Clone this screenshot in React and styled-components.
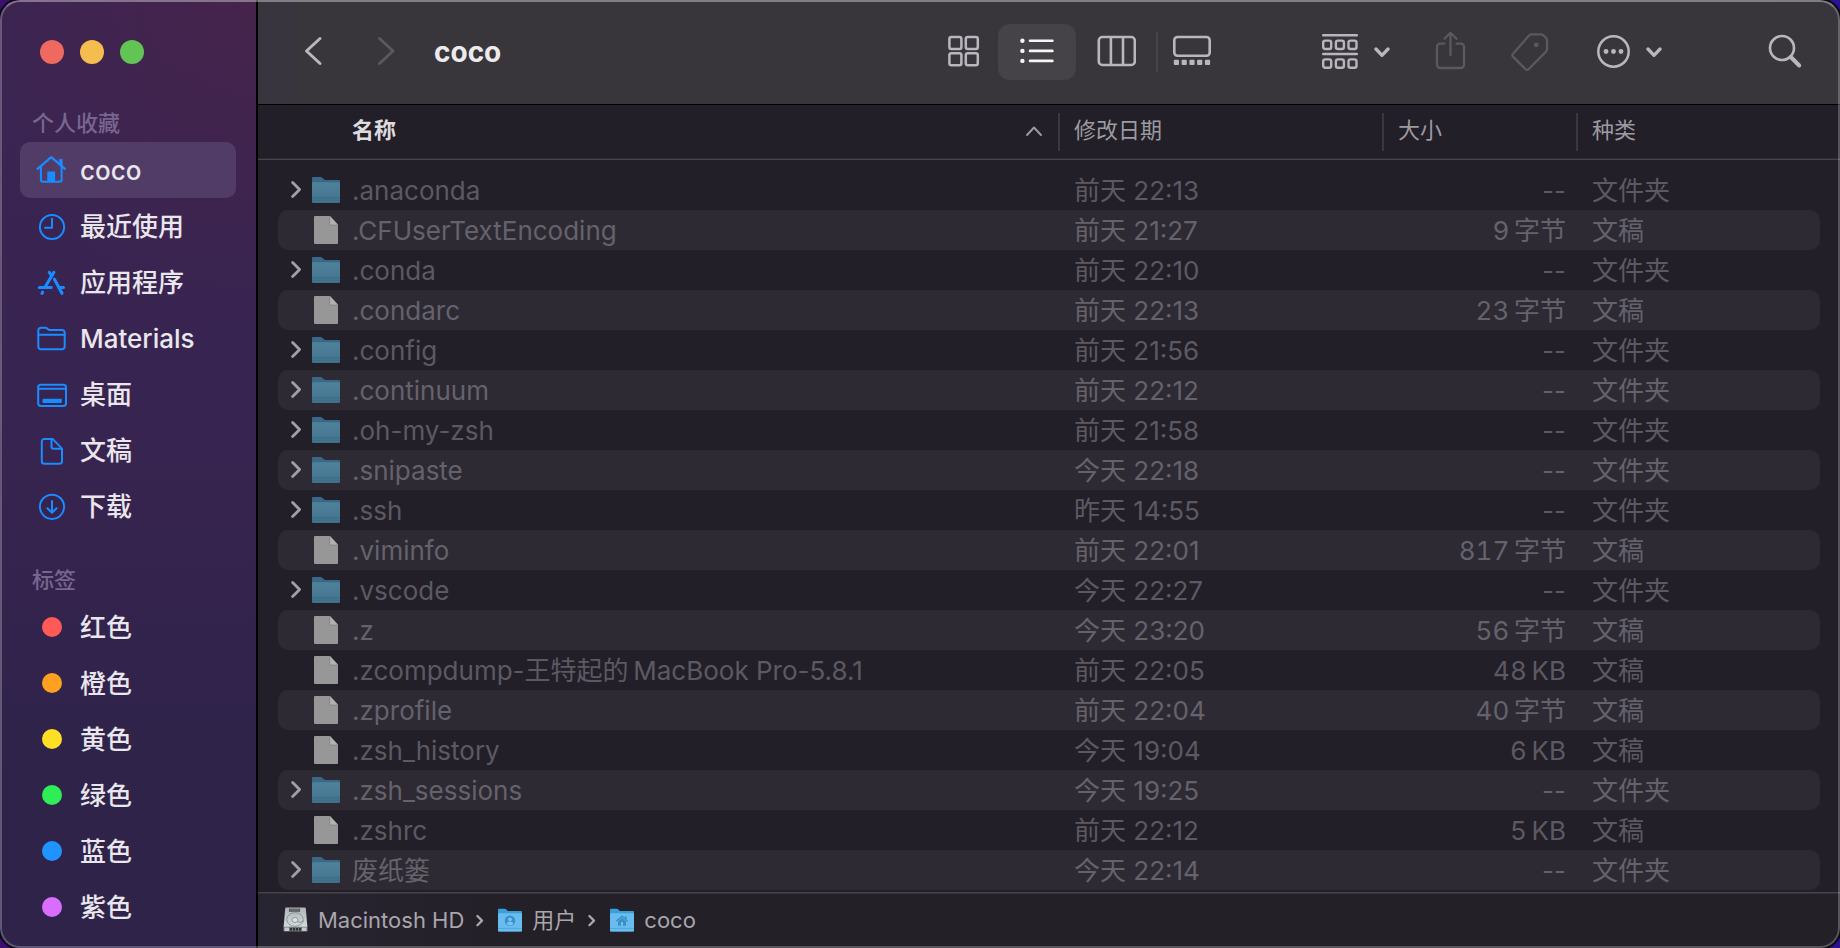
import React from "react";
import styled, { createGlobalStyle, css } from "styled-components";

const GlobalStyle = createGlobalStyle`
  *, *::before, *::after { box-sizing: border-box; }
  html, body { margin: 0; padding: 0; }
  body {
    min-height: 100vh;
    background: linear-gradient(90deg, #3c1070 0%, #33107c 50%, #2c1290 100%);
    font-family: Inter, "Noto Sans CJK SC", sans-serif;
    -webkit-font-smoothing: antialiased;
  }
  button {
    margin: 0;
    padding: 0;
    border: 0;
    background: none;
    color: inherit;
    font: inherit;
  }
  a { color: inherit; text-decoration: none; }
  svg { display: block; flex: none; }
`;

const Window = styled.div`
  position: relative;
  display: flex;
  min-height: 100vh;
  border-radius: 20px;
  overflow: hidden;
  background: #221f28;
  box-shadow: 0 0 0 2px #0c0714;

  &::after {
    content: "";
    position: absolute;
    inset: 0;
    border: 2px solid rgba(255, 255, 255, 0.24);
    border-top-color: rgba(255, 255, 255, 0.36);
    border-radius: 20px;
    pointer-events: none;
  }
`;

/* Sidebar */

const Sidebar = styled.aside`
  flex: none;
  width: 258px;
  padding: 40px 20px 12px;
  border-right: 2px solid #000;
  background:
    radial-gradient(circle at 100% 0%, rgba(80, 34, 68, 0.5), rgba(80, 34, 68, 0) 300px),
    linear-gradient(180deg, #3b2553 0%, #382450 45%, #2f234a 80%, #2f234a 100%);
`;

const TrafficLights = styled.div`
  display: flex;
  gap: 16px;
  padding-left: 20px;
  margin-bottom: 43px;
`;

const Light = styled.button`
  width: 24px;
  height: 24px;
  border-radius: 50%;
  background: ${(p) => p.$color};
`;

const Group = styled.nav`
  & + & { margin-top: 30px; }
`;

const GroupTitle = styled.h2`
  margin: 0;
  padding: 0 12px;
  height: 35px;
  font-size: 22px;
  line-height: 32px;
  font-weight: 500;
  color: #786690;
`;

const SideItem = styled.a`
  display: flex;
  align-items: center;
  gap: 12px;
  height: 56px;
  padding-left: 16px;
  border-radius: 10px;
  font-size: 26px;
  line-height: 32px;
  font-weight: 500;
  color: #e9e6ec;
  ${(p) => p.$active && css`background: #513c68;`}
`;

const Label = styled.span`
  padding-top: 2px;
`;

const TagDot = styled.span`
  flex: none;
  width: 20px;
  height: 20px;
  margin: 0 6px;
  border-radius: 50%;
  background: ${(p) => p.$color};
`;

/* Toolbar */

const Main = styled.main`
  flex: 1;
  min-width: 0;
  display: flex;
  flex-direction: column;
`;

const Toolbar = styled.header`
  display: flex;
  align-items: center;
  height: 105px;
  padding: 0 36px 0 38px;
  border-bottom: 1px solid #000;
  background: linear-gradient(90deg, #38353f 0, #38353f 28px, #38353b 40px);
`;

const NavButtons = styled.div`
  display: flex;
  gap: 39px;
`;

const ToolButton = styled.button`
  display: flex;
  align-items: center;
  justify-content: flex-start;
  gap: 16px;
  color: ${(p) => (p.$dim ? "#5b585f" : "#bab6be")};
`;

const Title = styled.h1`
  flex: 1;
  margin: 0 0 0 31px;
  font-size: 28px;
  line-height: 36px;
  font-weight: 700;
  color: #eceaed;
`;

const ViewSwitch = styled.div`
  display: flex;
  align-items: center;
  margin-right: 96px;
`;

const ViewButton = styled.button`
  display: flex;
  align-items: center;
  justify-content: center;
  width: ${(p) => (p.$wide ? 80 : 68)}px;
  height: 56px;
  border-radius: 12px;
  color: #bab6be;
  ${(p) => p.$active && css`
    width: 78px;
    background: #454248;
    color: #f6f5f6;
  `}
`;

const ViewDivider = styled.span`
  width: 2px;
  height: 40px;
  background: #454248;
`;

const Actions = styled.div`
  display: flex;
  align-items: center;
  gap: 44px;
`;

const SearchSlot = styled.div`
  margin-left: 62px;
`;

/* File list */

const List = styled.table`
  flex: 1;
  display: block;
  padding-bottom: 2px;
`;

const columns = css`
  display: grid;
  grid-template-columns: minmax(0, 1fr) 324px 194px 244px;
`;

const Head = styled.thead`
  display: block;
`;

const HeadRow = styled.tr`
  ${columns}
  align-items: center;
  height: 55px;
  padding: 0 20px;
  border-bottom: 1px solid #46434b;
  box-shadow: inset 0 -1px 0 #2f2c35;
`;

const HeadCell = styled.th`
  display: flex;
  align-items: center;
  height: 38px;
  padding: 0 16px 4px 14px;
  border-left: 2px solid #3a3740;
  font-size: 22px;
  line-height: 32px;
  font-weight: 400;
  text-align: left;
  color: #9d9aa0;
`;

const NameHeadCell = styled(HeadCell)`
  padding-left: 74px;
  border-left: 0;
`;

const SortButton = styled.button`
  flex: 1;
  display: flex;
  align-items: center;
  justify-content: space-between;
  font-weight: 700;
  color: #dddbde;
  svg { color: #9d9aa0; }
`;

const Body = styled.tbody`
  display: block;
  padding: 10px 20px 0;
`;

const Row = styled.tr`
  ${columns}
  height: 40px;
  border-radius: 10px;
  font-size: 26px;
  line-height: 38px;
  color: #5c5963;
  &:nth-child(even) {
    background: #2d2a33;
    color: #65626c;
  }
`;

const Cell = styled.td`
  padding: 2px 0 0 16px;
  white-space: nowrap;
`;

const NameCell = styled(Cell)`
  display: flex;
  align-items: center;
  padding: 0 0 0 10px;
  overflow: hidden;
`;

const SizeCell = styled(Cell)`
  padding-right: 10px;
  text-align: right;
  font-variant-numeric: ${(p) => (p.$empty ? "normal" : "tabular-nums")};
`;

const Disclosure = styled.button`
  width: 16px;
  margin-right: 6px;
  color: #a29fa5;
`;

const FileIcon = styled.span`
  flex: none;
  width: 32px;
  margin-left: ${(p) => (p.$indent ? 22 : 0)}px;
  margin-right: 10px;
`;

/* Path bar */

const PathBar = styled.nav`
  display: flex;
  align-items: center;
  gap: 10px;
  height: 56px;
  padding: 0 24px 2px;
  border-top: 1px solid #46434b;
  box-shadow: inset 0 1px 0 #35323b;
  background: linear-gradient(90deg, #282532 0, #232028 240px);
  font-size: 22px;
  line-height: 32px;
  color: #a9a6ac;
`;

const PathItem = styled.a`
  display: flex;
  align-items: center;
  gap: 10px;
`;

/* Icons */

const stroke = {
  fill: "none",
  stroke: "currentColor",
  strokeLinecap: "round",
  strokeLinejoin: "round",
};

const SideSvg = ({ children }) => (
  <svg width="32" height="32" viewBox="0 0 32 32" {...stroke} stroke="#1a8cff" strokeWidth="2" aria-hidden="true">
    {children}
  </svg>
);

const HomeIcon = () => (
  <SideSvg>
    <path d="M1.5 14.8 15.3 3.2l13.6 11.6" strokeWidth="2.2" />
    <path d="M4.9 12.5v13.2a2 2 0 0 0 2 2h16.7a2 2 0 0 0 2-2V12.5" />
    <path d="M11.3 17.5h7.8v10h-7.8z" fill="#1a8cff" stroke="none" />
    <path d="M23.6 5.4h2.6v6.6l-2.6-2.3z" fill="#1a8cff" strokeWidth="0.8" />
  </SideSvg>
);

const ClockIcon = () => (
  <SideSvg>
    <circle cx="16" cy="17" r="12.1" />
    <path d="M16 8.8v9H9" />
  </SideSvg>
);

const AppsIcon = () => (
  <SideSvg>
    <g strokeWidth="3.1">
      <path d="M17.9 6.3 9.3 20.8" />
      <path d="M13.3 6.3l2 3.2" />
      <path d="M18.4 13.2 26 27.3" />
      <path d="M3.4 21.5h11.8M22.9 21.5h4.6" />
      <path d="M6.6 26.2l-.6 1.2" />
    </g>
  </SideSvg>
);

const FolderIcon = () => (
  <SideSvg>
    <path d="M2.3 24.6V8.4a2.6 2.6 0 0 1 2.6-2.6h4.4c.9 0 1.5.3 2.1.9l.6.6c.5.5 1 .7 1.7.7h12.4a2.6 2.6 0 0 1 2.6 2.6v14a2.6 2.6 0 0 1-2.6 2.6H4.9a2.6 2.6 0 0 1-2.6-2.6z" />
    <path d="M2.6 12.7h26" />
  </SideSvg>
);

const DesktopIcon = () => (
  <SideSvg>
    <rect x="2.2" y="6.7" width="27.8" height="21.2" rx="2.6" />
    <path d="M2.6 10.7h27" />
    <rect x="6.5" y="20.7" width="19.3" height="4.2" rx="1" fill="#1a8cff" stroke="none" />
  </SideSvg>
);

const DocumentIcon = () => (
  <SideSvg>
    <path d="M8.4 4.9h8.2l9.4 9.7v12.6a2.6 2.6 0 0 1-2.6 2.6h-15a2.6 2.6 0 0 1-2.6-2.6V7.5a2.6 2.6 0 0 1 2.6-2.6z" />
    <path d="M15.5 5.2v7.4a2.2 2.2 0 0 0 2.2 2.2h8" />
  </SideSvg>
);

const DownloadIcon = () => (
  <SideSvg>
    <circle cx="16" cy="16.8" r="12.1" />
    <path d="M16 11v11.6M11.4 18.2l4.6 4.5 4.6-4.5" />
  </SideSvg>
);

const BackIcon = () => (
  <svg width="34" height="34" viewBox="0 0 34 34" {...stroke} strokeWidth="3" aria-hidden="true">
    <path d="M24 3.5 10.5 16 24 28.5" />
  </svg>
);

const ForwardIcon = () => (
  <svg width="34" height="34" viewBox="0 0 34 34" {...stroke} strokeWidth="3" aria-hidden="true">
    <path d="M10.5 3.5 24 16 10.5 28.5" />
  </svg>
);

const GridIcon = () => (
  <svg width="32" height="34" viewBox="0 0 32 34" {...stroke} strokeWidth="2.5" aria-hidden="true">
    {[1.4, 17.8].map((x) =>
      [2, 18.2].map((y) => <rect key={`${x}-${y}`} x={x} y={y} width="12" height="12" rx="2" />)
    )}
  </svg>
);

const ListIcon = () => (
  <svg width="34" height="34" viewBox="0 0 34 34" {...stroke} strokeWidth="2.6" aria-hidden="true">
    {[5.8, 15.9, 25.9].map((y) => (
      <g key={y}>
        <circle cx="2.4" cy={y} r="2.2" fill="currentColor" stroke="none" />
        <path d={`M10 ${y}h22.4`} />
      </g>
    ))}
  </svg>
);

const ColumnsIcon = () => (
  <svg width="40" height="34" viewBox="0 0 40 34" {...stroke} strokeWidth="2.6" aria-hidden="true">
    <rect x="2.8" y="2" width="36" height="28" rx="3.6" />
    <path d="M14.9 2v28M27 2v28" strokeLinecap="butt" />
  </svg>
);

const GalleryIcon = () => (
  <svg width="38" height="34" viewBox="0 0 38 34" {...stroke} strokeWidth="2.6" aria-hidden="true">
    <rect x="1.3" y="2" width="35.4" height="18.7" rx="3.2" />
    {[0.8, 8.6, 16.4, 24.1, 31.9].map((x) => (
      <rect key={x} x={x} y="24.7" width="5.2" height="5.2" rx="1" fill="currentColor" stroke="none" />
    ))}
  </svg>
);

const GroupIcon = () => (
  <svg width="36" height="36" viewBox="0 0 36 36" {...stroke} strokeWidth="2.4" aria-hidden="true">
    <path d="M1.2 1.3h33.6M1.2 20h33.6" strokeWidth="2.5" />
    {[1.2, 13.9, 26.5].map((x) =>
      [6.6, 25.4].map((y) => <rect key={`${x}-${y}`} x={x} y={y} width="8" height="8.4" rx="2" />)
    )}
  </svg>
);

const MenuChevron = () => (
  <svg width="16" height="14" viewBox="0 0 16 14" {...stroke} strokeWidth="3.3" aria-hidden="true">
    <path d="m2 4 6 6.3L14 4" />
  </svg>
);

const ShareIcon = () => (
  <svg width="32" height="42" viewBox="0 0 32 42" {...stroke} strokeWidth="2.3" aria-hidden="true">
    <path d="M10.5 12.6H6.2a3.2 3.2 0 0 0-3.2 3.2v18a3.2 3.2 0 0 0 3.2 3.2h20.6a3.2 3.2 0 0 0 3.2-3.2V15.8a3.2 3.2 0 0 0-3.2-3.2h-4.3" />
    <path d="M16.5 24V2M10.5 7.7l6-6 6 6" />
  </svg>
);

const TagIcon = () => (
  <svg width="42" height="42" viewBox="0 0 42 42" {...stroke} strokeWidth="2.3" aria-hidden="true">
    <path d="M21.5 3.3h9.6c.8 0 1.4.2 2 .8l3 2.9c.6.6.9 1.2.9 2v9.2c0 1-.3 1.700-1 2.400L18.500 38.200c-.9.900-2 .9-2.900 0L3 25.600c-.9-.9-.9-2 0-2.900L19.200 4.300c.7-.7 1.300-1 2.300-1z" />
    <circle cx="26.3" cy="13.8" r="2.4" fill="currentColor" stroke="none" />
  </svg>
);

const MoreIcon = () => (
  <svg width="34" height="36" viewBox="0 0 34 36" {...stroke} strokeWidth="2.5" aria-hidden="true">
    <circle cx="17.5" cy="17.5" r="15.2" />
    {[10, 17.5, 25].map((x) => (
      <circle key={x} cx={x} cy="17.5" r="2.4" fill="currentColor" stroke="none" />
    ))}
  </svg>
);

const SearchIcon = () => (
  <svg width="36" height="36" viewBox="0 0 36 36" {...stroke} strokeWidth="2.6" aria-hidden="true">
    <circle cx="14" cy="14" r="12" />
    <path d="M22.8 23 31.2 31.5" strokeWidth="4" />
  </svg>
);

const SortIcon = () => (
  <svg width="16" height="16" viewBox="0 0 16 16" {...stroke} strokeWidth="1.9" aria-hidden="true">
    <path d="m1 13 7-7.5L15 13" />
  </svg>
);

const DisclosureIcon = () => (
  <svg width="16" height="20" viewBox="0 0 16 20" {...stroke} strokeWidth="2.8" aria-hidden="true">
    <path d="m4.6 2.6 7 7-7 7" />
  </svg>
);

const PathChevron = () => (
  <svg width="14" height="14" viewBox="0 0 14 14" {...stroke} strokeWidth="2.3" aria-hidden="true">
    <path d="m3.4 3 4.6 4.6-4.6 4.6" />
  </svg>
);

const FolderFile = () => (
  <svg width="32" height="32" viewBox="0 0 32 32" aria-hidden="true">
    <defs>
      <linearGradient id="folderFront" x1="0" y1="0" x2="0" y2="1">
        <stop offset="0" stopColor="#4f829a" />
        <stop offset="1" stopColor="#43758e" />
      </linearGradient>
    </defs>
    <path d="M2 4.200A1.200 1.200 0 0 1 3.200 3h7.300c.8 0 1.300.3 1.900.9l1.500 1.400c.5.400.9.600 1.500.6h13.400A1.200 1.200 0 0 1 30 7.100V27.500a1.200 1.200 0 0 1-1.200 1.200H3.200A1.200 1.200 0 0 1 2 27.500z" fill="#3a6987" />
    <path d="M2 9.300A1 1 0 0 1 3 8.300h26a1 1 0 0 1 1 1v18.200a1.200 1.200 0 0 1-1.200 1.200H3.200A1.200 1.200 0 0 1 2 27.500z" fill="url(#folderFront)" />
    <path d="M2 23.800h28M2 26.200h28" stroke="#37647c" strokeWidth="0.7" />
  </svg>
);

const PlainFile = () => (
  <svg width="32" height="32" viewBox="0 0 32 32" aria-hidden="true">
    <path d="M5 2h15l8 8.500V29a1 1 0 0 1-1 1H5a1 1 0 0 1-1-1V3a1 1 0 0 1 1-1z" fill="#979797" />
    <path d="M19.800 2v8a1 1 0 0 0 1 1H28z" fill="#b2b2b2" />
    <path d="M19.700 2v8.200a.9.900 0 0 0 .9.900H28" fill="none" stroke="#7e7e7e" strokeWidth="0.7" />
  </svg>
);

const BlueFolder = ({ children }) => (
  <svg width="24" height="26" viewBox="0 0 24 26" aria-hidden="true">
    <path d="M0 2.800a1 1 0 0 1 1-1h5.800c.7 0 1 .2 1.500.7l1 .9c.4.400.8.500 1.300.5H23a1 1 0 0 1 1 1V23.500a1 1 0 0 1-1 1H1a1 1 0 0 1-1-1z" fill="#3aa0dc" />
    <path d="M0 7.300a1 1 0 0 1 1-1h22a1 1 0 0 1 1 1v16.200a1 1 0 0 1-1 1H1a1 1 0 0 1-1-1z" fill="#68bdee" />
    <path d="M0 21.400h24" stroke="#4aa6dd" strokeWidth="0.9" />
    {children}
  </svg>
);

const UsersFolder = () => (
  <BlueFolder>
    <circle cx="12" cy="13.800" r="5.300" fill="#3b8fcb" />
    <circle cx="12" cy="12.300" r="1.900" fill="#74c4f2" />
    <path d="M8.600 16.900c.6-1.700 1.900-2.400 3.400-2.400s2.800.7 3.400 2.400a5 5 0 0 1-6.800 0z" fill="#74c4f2" />
  </BlueFolder>
);

const HomeFolder = () => (
  <BlueFolder>
    <path d="m6.300 14.300 5.700-5 5.700 5" fill="none" stroke="#3b8fcb" strokeWidth="1.5" />
    <path d="M8 14.200 12 10.700l4 3.500v4.600H8z" fill="#3b8fcb" />
    <path d="M15 9.300h1.600v3H15z" fill="#3b8fcb" />
    <path d="M11 15.200h2v3.600h-2z" fill="#74c4f2" />
  </BlueFolder>
);

const DiskIcon = () => (
  <svg width="26" height="26" viewBox="-1 0 26 26" aria-hidden="true">
    <defs>
      <linearGradient id="diskTop" x1="0" y1="0" x2="0" y2="1">
        <stop offset="0" stopColor="#aeb5b7" />
        <stop offset="1" stopColor="#d3dadb" />
      </linearGradient>
    </defs>
    <path d="M3.200.5h18.600a1 1 0 0 1 1 .9L24.400 20H.6L2.200 1.400a1 1 0 0 1 1-.9z" fill="url(#diskTop)" />
    <path d="M.4 19.800h24.200v3.800a1 1 0 0 1-1 1H1.400a1 1 0 0 1-1-1z" fill="#70787a" />
    <path d="M1.500 20.500h4.500v3.500H1.500zM19 20.500h4.500v3.500H19z" fill="#c3cacc" />
    <path d="M7 22.300h11.500" stroke="#2d3133" strokeWidth="2.6" strokeDasharray="2 1" />
    <rect x="6" y="1.6" width="11" height="3.2" fill="#4d5355" />
    <path d="M7 2.400h9M7 3.800h9" stroke="#91999b" strokeWidth="0.5" />
    <ellipse cx="12" cy="12.5" rx="8.2" ry="6.8" fill="none" stroke="#838c90" strokeWidth="0.8" />
    <ellipse cx="12" cy="13" rx="3" ry="2.5" fill="#dce2e4" stroke="#838c90" strokeWidth="0.8" />
    <path d="M14.500 14.500c2 1.200 4.200.8 6.500-.5" fill="none" stroke="#838c90" strokeWidth="0.9" />
  </svg>
);

/* Data */

const lights = [
  { name: "关闭", color: "#ee6a5f" },
  { name: "最小化", color: "#f5bd4f" },
  { name: "缩放", color: "#61c454" },
];

const favorites = [
  { name: "coco", Icon: HomeIcon, active: true },
  { name: "最近使用", Icon: ClockIcon },
  { name: "应用程序", Icon: AppsIcon },
  { name: "Materials", Icon: FolderIcon },
  { name: "桌面", Icon: DesktopIcon },
  { name: "文稿", Icon: DocumentIcon },
  { name: "下载", Icon: DownloadIcon },
];

const tags = [
  { name: "红色", color: "#ff5a57" },
  { name: "橙色", color: "#ffa021" },
  { name: "黄色", color: "#ffdf26" },
  { name: "绿色", color: "#2fed57" },
  { name: "蓝色", color: "#1f93ff" },
  { name: "紫色", color: "#da6dff" },
];

const files = [
  { name: ".anaconda", date: "前天 22:13", folder: true },
  { name: ".CFUserTextEncoding", date: "前天 21:27", size: "9\u2009字节" },
  { name: ".conda", date: "前天 22:10", folder: true },
  { name: ".condarc", date: "前天 22:13", size: "23\u2009字节" },
  { name: ".config", date: "前天 21:56", folder: true },
  { name: ".continuum", date: "前天 22:12", folder: true },
  { name: ".oh-my-zsh", date: "前天 21:58", folder: true },
  { name: ".snipaste", date: "今天 22:18", folder: true },
  { name: ".ssh", date: "昨天 14:55", folder: true },
  { name: ".viminfo", date: "前天 22:01", size: "817\u2009字节" },
  { name: ".vscode", date: "今天 22:27", folder: true },
  { name: ".z", date: "今天 23:20", size: "56\u2009字节" },
  { name: ".zcompdump-王特起的\u2009MacBook Pro-5.8.1", date: "前天 22:05", size: "48\u2009KB" },
  { name: ".zprofile", date: "前天 22:04", size: "40\u2009字节" },
  { name: ".zsh_history", date: "今天 19:04", size: "6\u2009KB" },
  { name: ".zsh_sessions", date: "今天 19:25", folder: true },
  { name: ".zshrc", date: "前天 22:12", size: "5\u2009KB" },
  { name: "废纸篓", date: "今天 22:14", folder: true },
];

function FileRow({ file }) {
  return (
    <Row>
      <NameCell>
        {file.folder && (
          <Disclosure type="button" aria-label={`展开 ${file.name}`}>
            <DisclosureIcon />
          </Disclosure>
        )}
        <FileIcon $indent={!file.folder}>{file.folder ? <FolderFile /> : <PlainFile />}</FileIcon>
        <Label>{file.name}</Label>
      </NameCell>
      <Cell>{file.date}</Cell>
      <SizeCell $empty={file.folder}>{file.folder ? "--" : file.size}</SizeCell>
      <Cell>{file.folder ? "文件夹" : "文稿"}</Cell>
    </Row>
  );
}

export default function App() {
  return (
    <>
      <GlobalStyle />
      <Window>
        <Sidebar>
          <TrafficLights>
            {lights.map((l) => (
              <Light key={l.name} type="button" aria-label={l.name} $color={l.color} />
            ))}
          </TrafficLights>
          <Group aria-labelledby="favorites">
            <GroupTitle id="favorites">个人收藏</GroupTitle>
            {favorites.map(({ name, Icon, active }) => (
              <SideItem key={name} href="#" $active={active}>
                <Icon />
                <Label>{name}</Label>
              </SideItem>
            ))}
          </Group>
          <Group aria-labelledby="tags">
            <GroupTitle id="tags">标签</GroupTitle>
            {tags.map((t) => (
              <SideItem key={t.name} href="#">
                <TagDot $color={t.color} />
                <Label>{t.name}</Label>
              </SideItem>
            ))}
          </Group>
        </Sidebar>

        <Main>
          <Toolbar>
            <NavButtons>
              <ToolButton type="button" aria-label="后退"><BackIcon /></ToolButton>
              <ToolButton type="button" aria-label="前进" $dim><ForwardIcon /></ToolButton>
            </NavButtons>
            <Title>coco</Title>
            <ViewSwitch>
              <ViewButton type="button" aria-label="图标"><GridIcon /></ViewButton>
              <ViewButton type="button" aria-label="列表" aria-pressed="true" $active><ListIcon /></ViewButton>
              <ViewButton type="button" aria-label="分栏" $wide><ColumnsIcon /></ViewButton>
              <ViewDivider />
              <ViewButton type="button" aria-label="画廊"><GalleryIcon /></ViewButton>
            </ViewSwitch>
            <Actions>
              <ToolButton type="button" aria-label="分组"><GroupIcon /><MenuChevron /></ToolButton>
              <ToolButton type="button" aria-label="共享" $dim><ShareIcon /></ToolButton>
              <ToolButton type="button" aria-label="编辑标签" $dim><TagIcon /></ToolButton>
              <ToolButton type="button" aria-label="更多操作"><MoreIcon /><MenuChevron /></ToolButton>
              <SearchSlot>
                <ToolButton type="button" aria-label="搜索"><SearchIcon /></ToolButton>
              </SearchSlot>
            </Actions>
          </Toolbar>

          <List>
            <Head>
              <HeadRow>
                <NameHeadCell scope="col" aria-sort="ascending">
                  <SortButton type="button">名称<SortIcon /></SortButton>
                </NameHeadCell>
                <HeadCell scope="col">修改日期</HeadCell>
                <HeadCell scope="col">大小</HeadCell>
                <HeadCell scope="col">种类</HeadCell>
              </HeadRow>
            </Head>
            <Body>
              {files.map((f) => <FileRow key={f.name} file={f} />)}
            </Body>
          </List>

          <PathBar aria-label="路径">
            <PathItem href="#"><DiskIcon />Macintosh HD</PathItem>
            <PathChevron />
            <PathItem href="#"><UsersFolder />用户</PathItem>
            <PathChevron />
            <PathItem href="#"><HomeFolder />coco</PathItem>
          </PathBar>
        </Main>
      </Window>
    </>
  );
}
